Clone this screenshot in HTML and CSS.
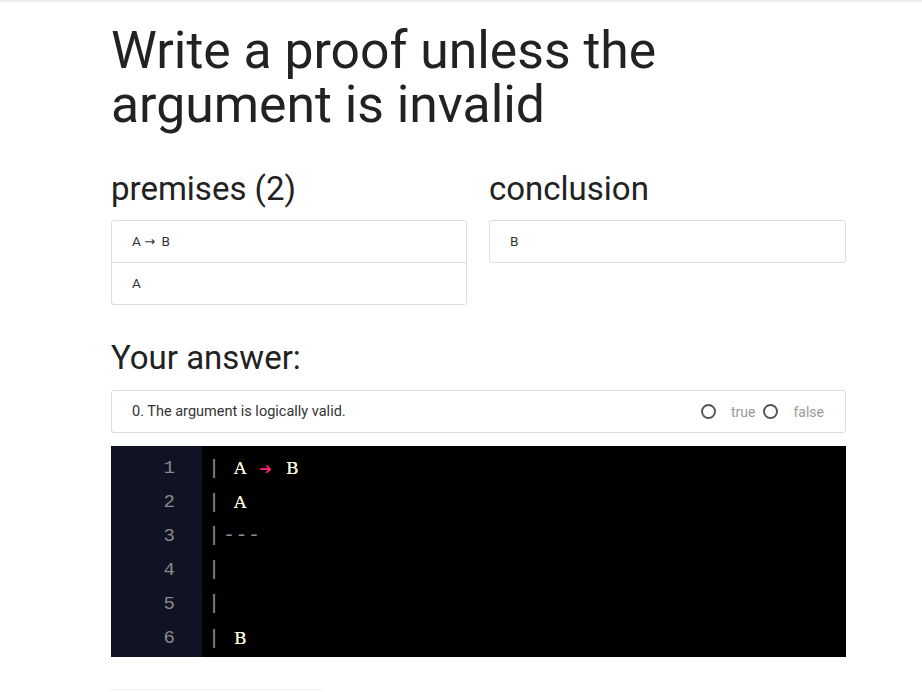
FILE: index.html
```html
<!DOCTYPE html>
<html lang="en">
<head>
<meta charset="utf-8">
<title>Proof</title>
<link rel="stylesheet" href="styles.css">
</head>
<body>
<main class="page">
  <h1 class="title">Write a proof unless the argument is invalid</h1>
  <section class="columns">
    <div class="col">
      <h2 class="heading">premises (2)</h2>
      <ul class="list">
        <li class="item">A <span class="arrow">→</span> B</li>
        <li class="item">A</li>
      </ul>
    </div>
    <div class="col">
      <h2 class="heading">conclusion</h2>
      <ul class="list">
        <li class="item">B</li>
      </ul>
    </div>
  </section>
  <h2 class="heading answer-heading">Your answer:</h2>
  <div class="answer">
    <span class="answer-text">0. The argument is logically valid.</span>
    <span class="radios">
      <span class="radio"></span><span class="radio-label">true</span>
      <span class="radio"></span><span class="radio-label">false</span>
    </span>
  </div>
  <div class="editor">
    <div class="gutter">
      <div class="num">1</div>
      <div class="num">2</div>
      <div class="num">3</div>
      <div class="num">4</div>
      <div class="num">5</div>
      <div class="num">6</div>
    </div>
    <div class="code">
      <div class="line"><span class="bar">|</span><span class="sym">A</span><span class="op">➔</span><span class="sym">B</span></div>
      <div class="line"><span class="bar">|</span><span class="sym">A</span></div>
      <div class="line"><span class="bar">|</span><span class="dash">---</span></div>
      <div class="line"><span class="bar">|</span></div>
      <div class="line"><span class="bar">|</span></div>
      <div class="line"><span class="bar">|</span><span class="sym">B</span></div>
    </div>
  </div>
  <div class="below"></div>
</main>
</body>
</html>
```

FILE: styles.css
```css
html, body {
  margin: 0;
  padding: 0;
  background: #fff;
}
body {
  border-top: 2px solid #ececec;
  font-family: Roboto, "Liberation Sans", sans-serif;
  color: #222;
}
.page {
  width: 735px;
  margin-left: 111px;
  padding-top: 22px;
}
.title {
  margin: 0;
  width: 620px;
  font-size: 51.7px;
  line-height: 54px;
  font-weight: 400;
  color: #222;
}
.columns {
  display: grid;
  grid-template-columns: 356px 357px;
  column-gap: 22px;
  margin-top: 37px;
}
.heading {
  margin: 0;
  font-size: 33px;
  line-height: 40px;
  font-weight: 400;
  color: #222;
}
.list {
  list-style: none;
  margin: 11px 0 0;
  padding: 0;
  border: 1px solid #ddd;
  border-radius: 3px;
}
.item {
  height: 41px;
  line-height: 41px;
  padding-left: 20px;
  font-size: 13.5px;
  color: #333;
}
.arrow {
  font-family: "DejaVu Sans", sans-serif;
  font-size: 13px;
  margin-right: 3px;
}
.item + .item {
  border-top: 1px solid #ddd;
}
.answer-heading {
  margin-top: 33px;
}
.answer {
  margin-top: 12px;
  height: 41px;
  border: 1px solid #ddd;
  border-radius: 3px;
  display: flex;
  align-items: center;
  justify-content: space-between;
  padding: 0 21px 0 20px;
  font-size: 14.5px;
}
.answer-text {
  color: #333;
}
.radios {
  display: flex;
  align-items: center;
}
.radio {
  width: 11px;
  height: 11px;
  border: 2px solid #555;
  border-radius: 50%;
  margin-right: 15px;
}
.radio-label {
  color: #999;
  font-size: 14px;
  margin-right: 8px;
}
.radio-label:last-child {
  margin-right: 0;
}
.editor {
  margin-top: 13px;
  display: flex;
  background: #000;
  height: 211px;
}
.gutter {
  width: 91px;
  background: #0f1324;
  padding-top: 5px;
  box-sizing: border-box;
}
.num {
  height: 34px;
  line-height: 34px;
  text-align: right;
  padding-right: 27px;
  font-family: "Liberation Mono", "DejaVu Sans Mono", monospace;
  font-size: 19px;
  color: #8a8a8a;
}
.code {
  padding-top: 5px;
  padding-left: 6px;
  font-family: "Liberation Mono", "DejaVu Sans Mono", monospace;
  font-size: 20px;
  color: #f8f8dc;
}
.line {
  height: 34px;
  line-height: 34px;
  white-space: pre;
}
.bar {
  color: #8a8a8a;
}
.dash {
  color: #8a8a8a;
  margin-left: 3px;
  letter-spacing: 0.5px;
}
.sym {
  font-family: "DejaVu Serif", "Liberation Serif", serif;
  font-size: 17px;
  margin-left: 14px;
  text-shadow: 0 0 0.4px #f8f8dc;
}
.op {
  color: #f92672;
  font-family: "DejaVu Sans", sans-serif;
  font-size: 15px;
  margin-left: 13px;
}
.op + .sym {
  margin-left: 14px;
}
.below {
  margin-top: 32px;
  width: 210px;
  height: 4px;
  border-top: 1px solid #f0f0f0;
}
```
